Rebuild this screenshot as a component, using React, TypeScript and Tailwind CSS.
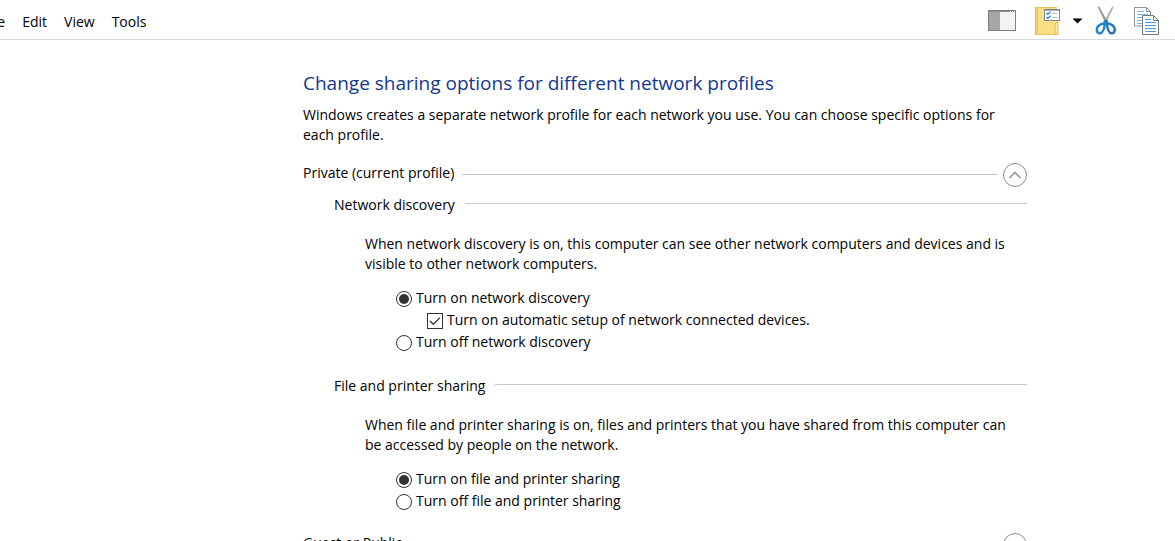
import { useState, type ReactNode } from "react";

const menus = ["File", "Edit", "View", "Tools"];

function PaneIcon() {
  return (
    <svg width="28" height="22" viewBox="0 0 28 22" aria-hidden="true">
      <rect x="0.5" y="0.5" width="27" height="20" fill="#f3f3f3" stroke="#7f7f7f" />
      <rect x="1" y="2" width="11" height="18" fill="#a6a6a6" />
      <path d="M1 1.5h26" stroke="#8c8c8c" />
      <path d="M22 1.5h1M24 1.5h1M26 1.5h1" stroke="#fff" />
    </svg>
  );
}

function FolderIcon() {
  return (
    <svg width="25" height="29" viewBox="0 0 25 29" aria-hidden="true">
      <path d="M0.5 1.5h2.500v27H0.5z" fill="#f3d26b" stroke="#e3bd52" />
      <path d="M3 1h19v27.500H3z" fill="#fbdf86" />
      <path d="M0.5 1.500h21M0.5 28.500h21.500" stroke="#e6c25a" />
      <path d="M22.500 15l-2.500 3v10.500h3V17z" fill="#ffe9a2" stroke="#e3bd52" />
      <rect x="9.500" y="3.500" width="15" height="11" fill="#fff" stroke="#7d8790" />
      <path d="M10 4h14" stroke="#65707a" />
      <path d="M11.500 7l1.300 1.300L15.500 5.800M11.500 11l1.300 1.300L15.500 9.800" fill="none" stroke="#2f86dc" strokeWidth="1.300" />
      <path d="M17 7.500h5.500M17 11.500h5.500" stroke="#b9c2ca" />
    </svg>
  );
}

function ScissorsIcon() {
  return (
    <svg width="22" height="29" viewBox="0 0 22 29" aria-hidden="true">
      <path d="M2.500 0.500L4.300 0.800 12.600 15.500 10.500 17.500z" fill="#999" />
      <path d="M18.800 0.500L17 0.800 9 15.500 11 17.500z" fill="#b0b0b0" />
      <path d="M8.800 14.500l2-1 2 1 0.600 3.500h-5.200z" fill="#1f79b8" />
      <path d="M9.800 17.500C5.500 17.500 1.800 20 1.800 23.800C1.800 26.300 3.300 27.300 5.100 27.200C8 27 9.300 22.800 9.800 17.500z" fill="none" stroke="#2385c7" strokeWidth="2.500" strokeLinejoin="round" />
      <path d="M11.800 17.500C16.100 17.500 19.800 20 19.800 23.800C19.800 26.300 18.300 27.300 16.500 27.200C13.600 27 12.300 22.800 11.800 17.500z" fill="none" stroke="#1f79b8" strokeWidth="2.500" strokeLinejoin="round" />
    </svg>
  );
}

function CopyIcon() {
  return (
    <svg width="25" height="29" viewBox="0 0 25 29" aria-hidden="true">
      <path d="M0.500 1.500h12l4 4v14.500h-16z" fill="#fff" stroke="#8a949c" />
      <path d="M12.500 1.500v4h4" fill="none" stroke="#8a949c" />
      <path d="M3 5.500h7M3 8.500h11M3 11.500h11M3 14.500h11M3 17.500h11" stroke="#7fb2e0" />
      <path d="M8.500 9.500h11l5 5v14h-16z" fill="#fff" stroke="#6f7a83" />
      <path d="M19.500 9.500v5h5" fill="none" stroke="#6f7a83" />
      <path d="M11 13.500h6M11 16.500h11M11 19.500h11M11 22.500h11M11 25.500h11" stroke="#4f9add" />
    </svg>
  );
}

function Profile({ title, children }: { title: string; children?: ReactNode }) {
  const [open, setOpen] = useState(true);
  return (
    <section>
      <div className="flex items-start">
        <h2 className="leading-5">{title}</h2>
        <div className="ml-2 mr-1.5 mt-[11px] grow border-t border-[#c8c8c8]" />
        <button
          type="button"
          aria-label={title}
          aria-expanded={open}
          onClick={() => setOpen(!open)}
          className="flex size-6 shrink-0 items-center justify-center rounded-full border border-[#8a8a8a]"
        >
          <svg width="14" height="8" viewBox="0 0 14 8" aria-hidden="true">
            <path d="M1.500 7L7 1.500 12.500 7" fill="none" stroke="#9a9a9a" strokeWidth="1.700" />
          </svg>
        </button>
      </div>
      {open && children}
    </section>
  );
}

function Group({ title, text, children }: { title: string; text: string; children: ReactNode }) {
  return (
    <section className="pl-[31px]">
      <div className="flex items-start">
        <h3 className="leading-5">{title}</h3>
        <div className="ml-2.5 mt-2 grow border-t border-[#c8c8c8]" />
      </div>
      <div className="pl-[31px] pr-4 pt-[19px]">
        <p>{text}</p>
        <div className="pl-[31px] pt-3.5">{children}</div>
      </div>
    </section>
  );
}

function Radio({ name, label, checked }: { name: string; label: string; checked?: boolean }) {
  return (
    <label className="flex h-[22px] items-center gap-1">
      <input
        type="radio"
        name={name}
        defaultChecked={checked}
        className="flex size-4 shrink-0 appearance-none items-center justify-center rounded-full border border-[#333] before:size-2.5 before:rounded-full checked:before:bg-[#333]"
      />
      <span className="self-start leading-5">{label}</span>
    </label>
  );
}

function Check({ label }: { label: string }) {
  return (
    <label className="flex h-[22px] items-center gap-1 pl-[31px]">
      <span className="grid size-4 shrink-0">
        <input type="checkbox" defaultChecked className="peer col-start-1 row-start-1 size-4 appearance-none border border-[#333]" />
        <svg width="16" height="16" viewBox="0 0 16 16" aria-hidden="true" className="invisible col-start-1 row-start-1 peer-checked:visible">
          <path d="M3 8l3.300 3.300L13 4.600" fill="none" stroke="#333" strokeWidth="1.300" />
        </svg>
      </span>
      <span className="self-start leading-5">{label}</span>
    </label>
  );
}

export default function App() {
  return (
    <div className="flex h-screen flex-col overflow-hidden bg-white font-['Open_Sans','Noto_Sans',sans-serif] text-[14px] leading-5 text-black">
      <header className="flex h-10 shrink-0 items-center justify-between border-b border-[#d9d9d9] pr-4">
        <nav className="-ml-[17px] flex gap-[17px] pt-1">
          {menus.map((m) => (
            <button key={m} type="button">{m}</button>
          ))}
        </nav>
        <div className="flex items-center pt-0.5">
          <button type="button" aria-label="Preview pane"><PaneIcon /></button>
          <button type="button" aria-label="Folder options" className="ml-[19px]"><FolderIcon /></button>
          <button type="button" aria-label="More options" className="ml-3">
            <svg width="11" height="6" viewBox="0 0 11 6" aria-hidden="true"><path d="M0.500 0.500h10L5.500 5.500z" fill="#000" /></svg>
          </button>
          <button type="button" aria-label="Cut" className="ml-3"><ScissorsIcon /></button>
          <button type="button" aria-label="Copy" className="ml-[17px]"><CopyIcon /></button>
        </div>
      </header>
      <main className="pl-[303px] pr-[148px] pt-[29px]">
        <h1 className="text-[19px] leading-7 text-[#12388f]">Change sharing options for different network profiles</h1>
        <p className="mt-2">
          Windows creates a separate network profile for each network you use. You can choose specific options for each profile.
        </p>
        <div className="flex flex-col gap-5 pt-[18px]">
          <Profile title="Private (current profile)">
            <div className="flex flex-col gap-[22px] pt-2">
              <Group
                title="Network discovery"
                text="When network discovery is on, this computer can see other network computers and devices and is visible to other network computers."
              >
                <Radio name="discovery" label="Turn on network discovery" checked />
                <Check label="Turn on automatic setup of network connected devices." />
                <Radio name="discovery" label="Turn off network discovery" />
              </Group>
              <Group
                title="File and printer sharing"
                text="When file and printer sharing is on, files and printers that you have shared from this computer can be accessed by people on the network."
              >
                <Radio name="sharing" label="Turn on file and printer sharing" checked />
                <Radio name="sharing" label="Turn off file and printer sharing" />
              </Group>
            </div>
          </Profile>
          <Profile title="Guest or Public" />
        </div>
      </main>
    </div>
  );
}
